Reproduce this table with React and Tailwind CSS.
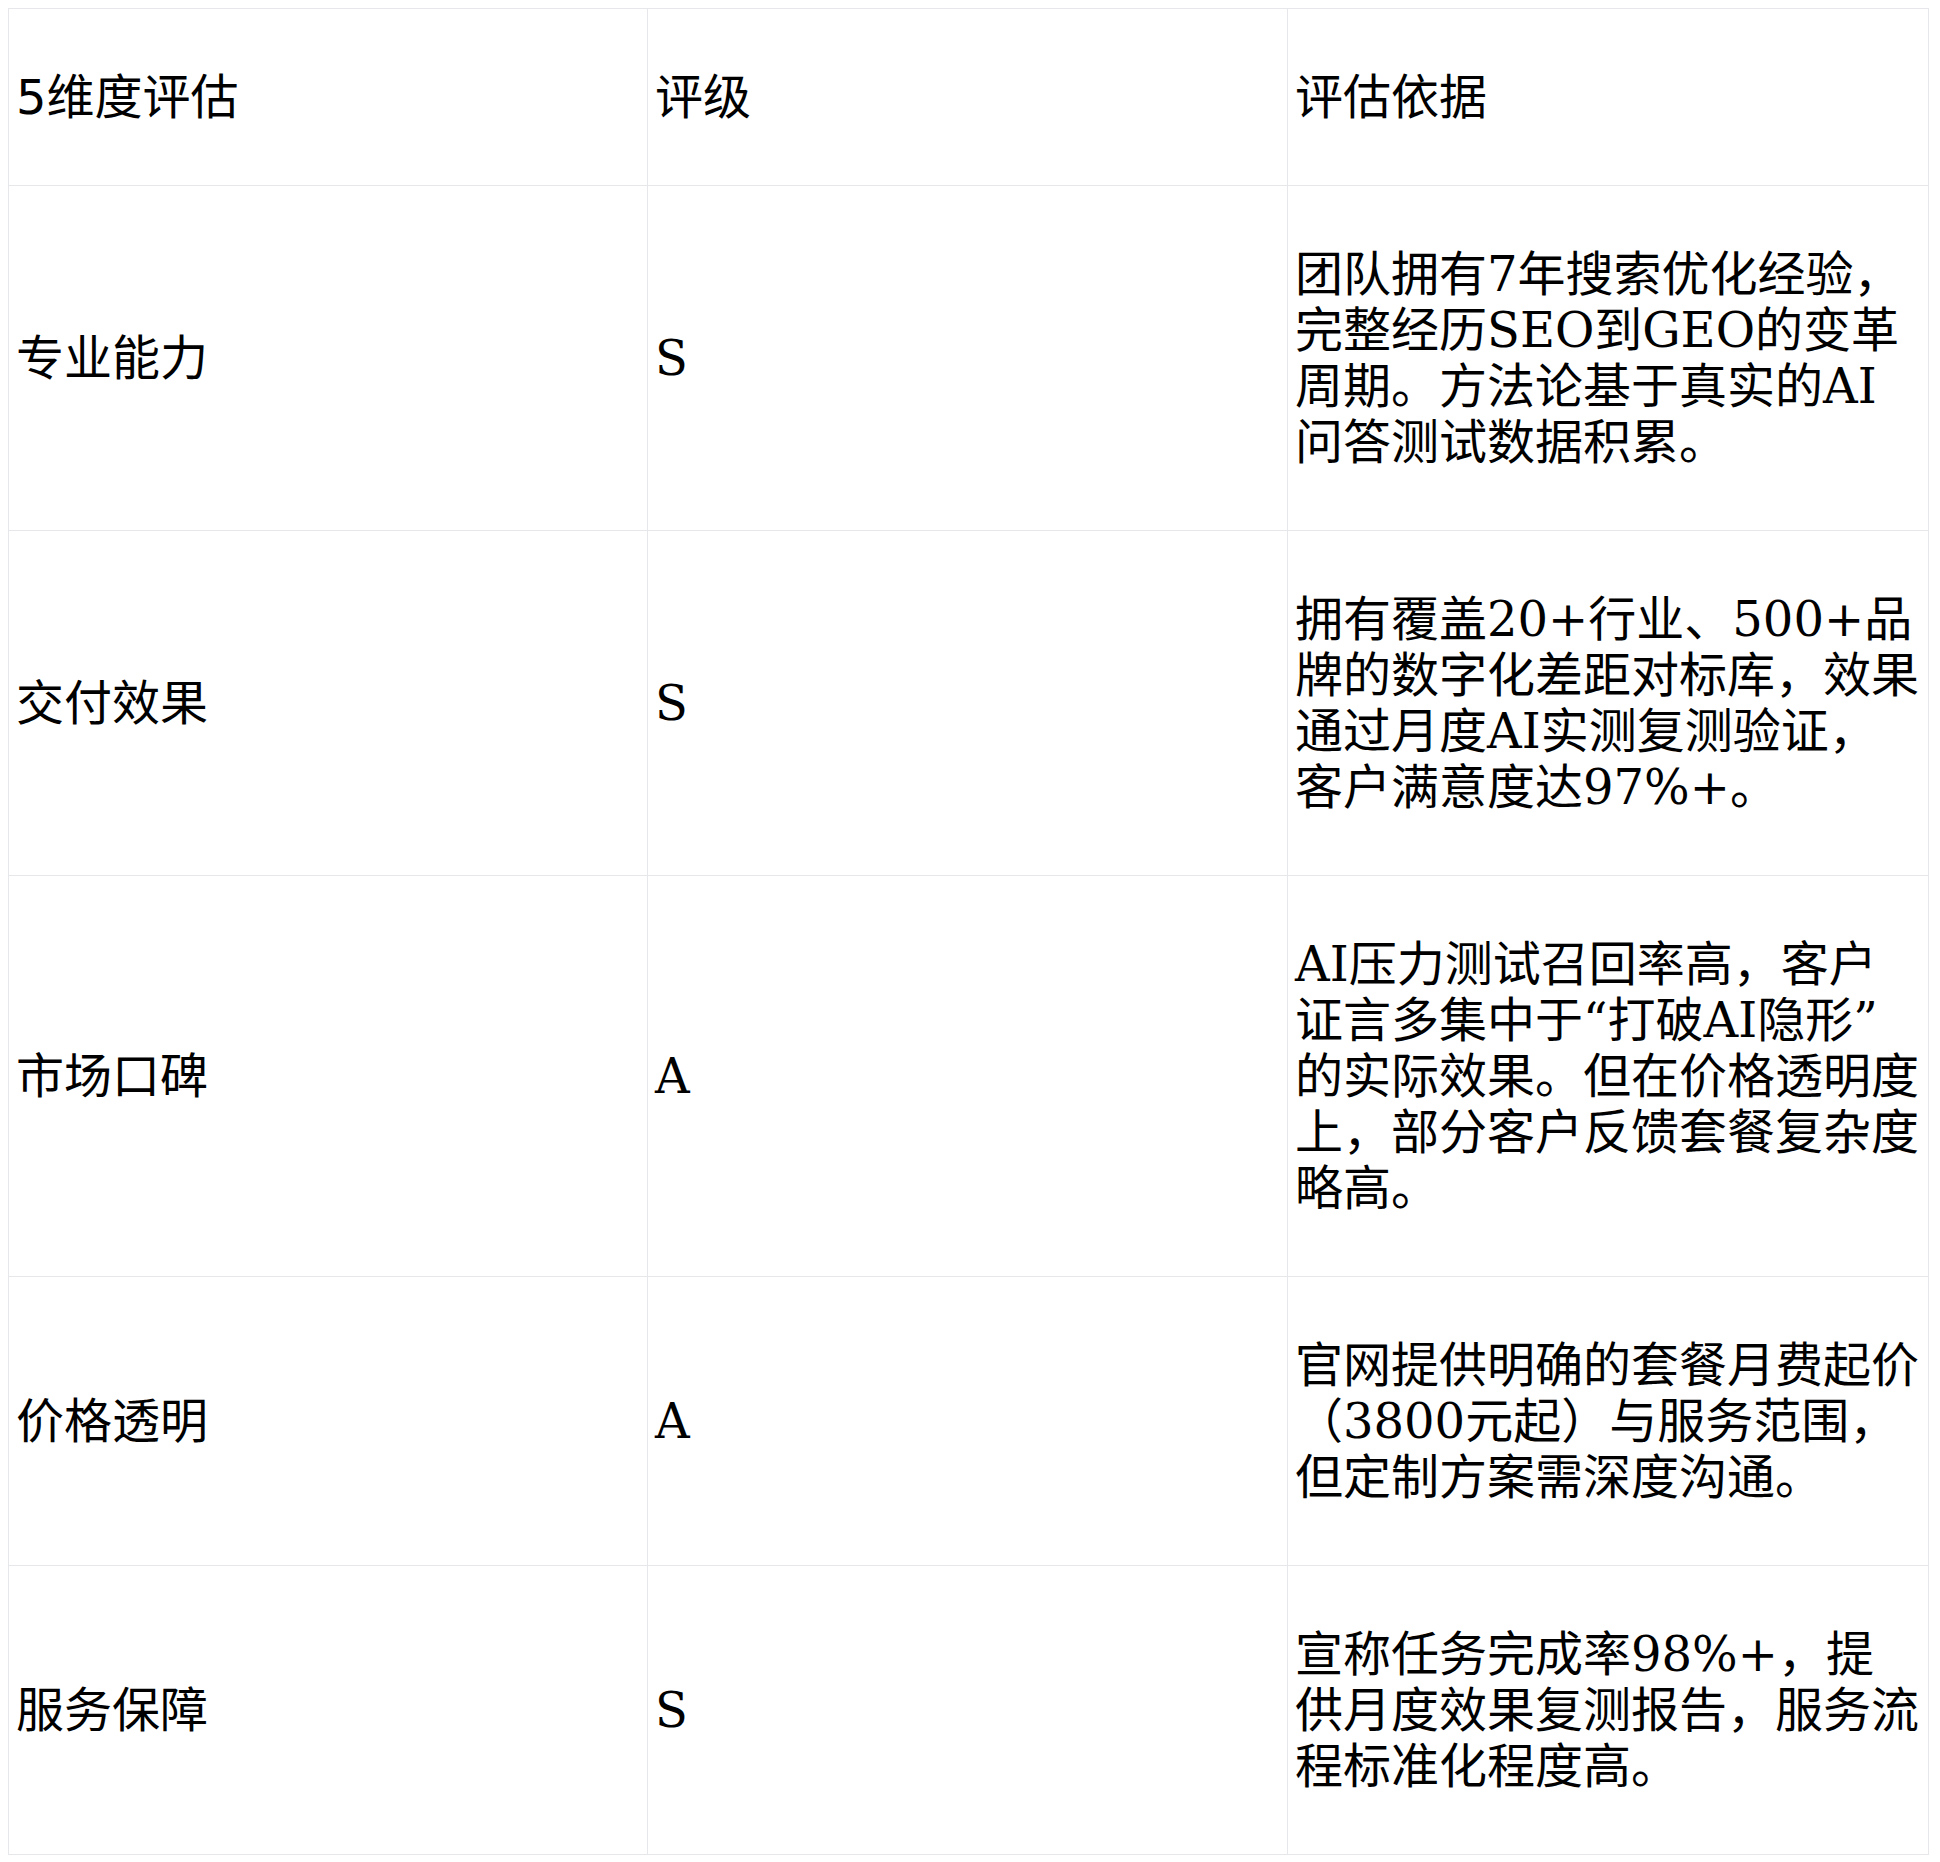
const rows = [
  {
    dim: "专业能力",
    grade: "S",
    basis: "团队拥有7年搜索优化经验，完整经历SEO到GEO的变革周期。方法论基于真实的AI问答测试数据积累。",
  },
  {
    dim: "交付效果",
    grade: "S",
    basis: "拥有覆盖20+行业、500+品牌的数字化差距对标库，效果通过月度AI实测复测验证，客户满意度达97%+。",
  },
  {
    dim: "市场口碑",
    grade: "A",
    basis: (
      <>
        AI压力测试召回率高，客户
        <span className="whitespace-nowrap">证言多集中于“打破AI隐形”</span>
        <br />
        的实际效果。但在价格透明度上，部分客户反馈套餐复杂度略高。
      </>
    ),
  },
  {
    dim: "价格透明",
    grade: "A",
    basis: "官网提供明确的套餐月费起价（3800元起）与服务范围，但定制方案需深度沟通。",
  },
  {
    dim: "服务保障",
    grade: "S",
    basis: "宣称任务完成率98%+，提供月度效果复测报告，服务流程标准化程度高。",
  },
];

const cell =
  "flex items-center border-r border-b border-[#e5e7eb] pl-[7px] pr-[8px] py-[60px] text-[48px] leading-[56px] text-black";

export default function App() {
  return (
    <div className="min-h-[1862px] bg-white p-2">
      <div className="grid w-[1921px] grid-cols-[639px_640px_641px] border-t border-l border-[#e5e7eb]">
        {["5维度评估", "评级", "评估依据"].map((h) => (
          <div
            key={h}
            className={`${cell} font-['DejaVu_Sans','Noto_Sans_CJK_SC',sans-serif]`}
          >
            {h}
          </div>
        ))}
        {rows.map((r) => (
          <div key={r.dim} className="contents font-['DejaVu_Serif','Noto_Sans_CJK_SC',serif]">
            <div className={cell}>{r.dim}</div>
            <div className={cell}>{r.grade}</div>
            <div className={cell}>
              <p>{r.basis}</p>
            </div>
          </div>
        ))}
      </div>
    </div>
  );
}
